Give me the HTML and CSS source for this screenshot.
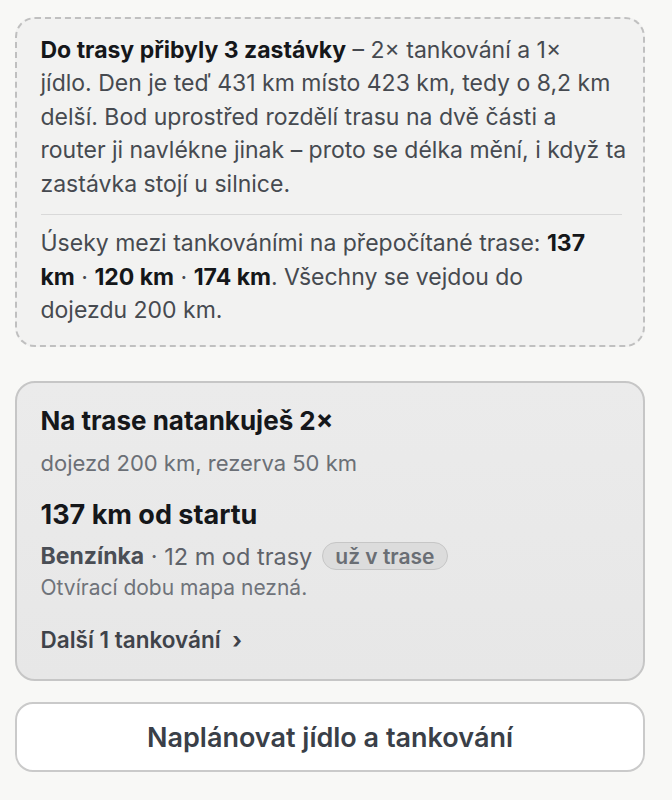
FILE: index.html
```html
<!DOCTYPE html>
<html lang="cs">
<head>
<meta charset="utf-8">
<link rel="stylesheet" href="styles.css">
</head>
<body>
<div class="page">
  <section class="note">
    <p class="note-text"><strong>Do trasy přibyly 3 zastávky</strong> – 2× tankování a 1×<br>jídlo. Den je teď 431 km místo 423 km, tedy o 8,2 km<br>delší. Bod uprostřed rozdělí trasu na dvě části a<br>router ji navlékne jinak – proto se délka mění, i když ta<br>zastávka stojí u silnice.</p>
    <hr class="divider">
    <p class="note-text">Úseky mezi tankováními na přepočítané trase: <strong>137<br>km</strong> · <strong>120 km</strong> · <strong>174 km</strong>. Všechny se vejdou do<br>dojezdu 200 km.</p>
  </section>

  <section class="card">
    <h2 class="card-title">Na trase natankuješ 2×</h2>
    <p class="card-sub">dojezd 200 km, rezerva 50 km</p>
    <h3 class="stop-title">137 km od startu</h3>
    <div class="stop-line"><span class="stop-name">Benzínka</span><span class="stop-dist">&nbsp;· 12 m od trasy</span><span class="pill">už v trase</span></div>
    <p class="stop-hours">Otvírací dobu mapa nezná.</p>
    <div class="more">Další 1 tankování <span class="chev">›</span></div>
  </section>

  <button class="plan-btn">Naplánovat jídlo a tankování</button>
</div>
</body>
</html>
```

FILE: styles.css
```css
* { box-sizing: border-box; }
html, body {
  margin: 0;
  padding: 0;
  background: #f8f8f6;
  font-family: Inter, "Noto Sans", sans-serif;
}
.page {
  padding: 17px 27px 0 15px;
  display: flex;
  flex-direction: column;
}
.note {
  border: 2px dashed #c0c0c0;
  border-radius: 20px;
  background: #f2f2f1;
  padding: 14.5px 6px 18px 23.5px;
  height: 330px;
}
.note-text {
  margin: 0;
  font-size: 23px;
  line-height: 33.5px;
  color: #464a50;
}
.note-text strong {
  color: #15171a;
  font-weight: 700;
}
.divider {
  border: 0;
  border-top: 1.5px solid #d9d9d9;
  margin: 13px 15px 12px 0;
}
.card {
  margin-top: 34px;
  border: 2px solid #c6c6c6;
  border-radius: 20px;
  background: linear-gradient(180deg, #ebebeb, #e7e7e7);
  padding: 22px 24px 0 23.5px;
  height: 300px;
}
.card-title {
  margin: 0;
  font-size: 26px;
  line-height: 32px;
  font-weight: 700;
  color: #15171a;
}
.card-sub {
  margin: 12px 0 0;
  font-size: 22px;
  line-height: 28px;
  color: #6b6f76;
}
.stop-title {
  margin: 22px 0 0;
  font-size: 27px;
  line-height: 32px;
  font-weight: 700;
  color: #15171a;
}
.stop-line {
  margin-top: 10px;
  display: flex;
  align-items: center;
  height: 30px;
  font-size: 23.5px;
  color: #5f636a;
}
.stop-name {
  font-weight: 700;
  color: #4a4e55;
  font-size: 23px;
}
.pill {
  margin-left: 10px;
  height: 28px;
  padding: 0 12px;
  border: 1.5px solid #c6c6c6;
  border-radius: 14px;
  background: #dcdcdc;
  font-size: 21px;
  font-weight: 600;
  color: #6a6e74;
  display: flex;
  align-items: center;
}
.stop-hours {
  margin: 4px 0 0;
  font-size: 21px;
  line-height: 26px;
  color: #6f737a;
}
.more {
  margin-top: 24px;
  font-size: 22.5px;
  line-height: 30px;
  font-weight: 600;
  color: #3f434a;
}
.chev {
  margin-left: 6px;
  font-weight: 700;
}
.plan-btn {
  margin-top: 21px;
  height: 70px;
  width: 100%;
  border: 2px solid #cacaca;
  border-radius: 18px;
  background: #ffffff;
  font-family: Inter, "Noto Sans", sans-serif;
  font-size: 27px;
  font-weight: 600;
  color: #3a3f48;
}
```
